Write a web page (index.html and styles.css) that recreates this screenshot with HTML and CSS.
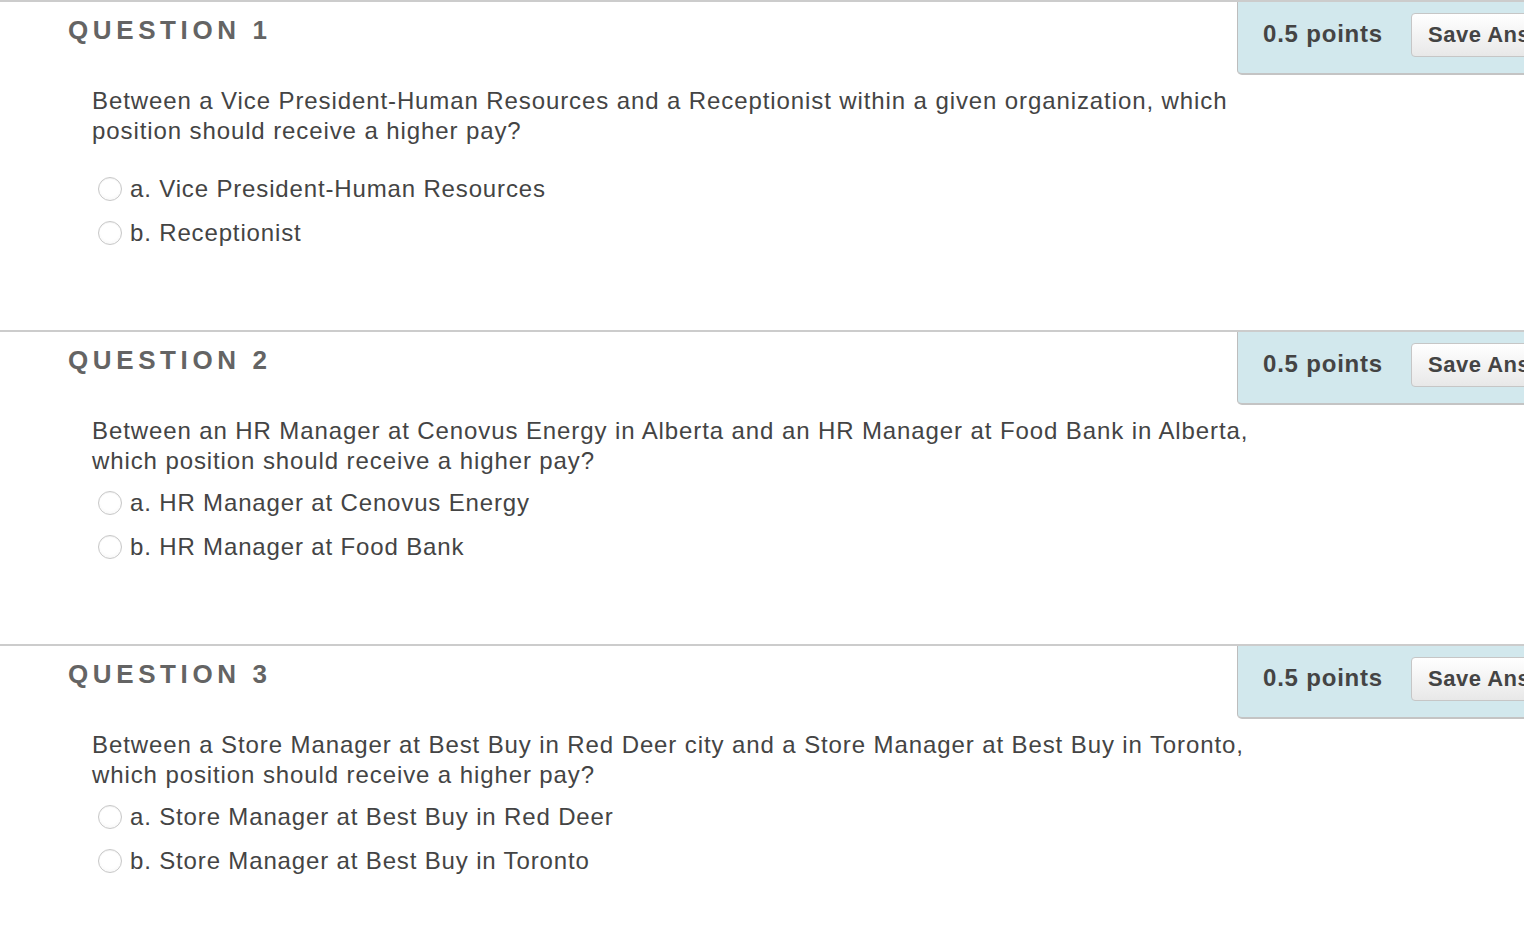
FILE: index.html
```html
<!DOCTYPE html>
<html lang="en">
<head>
<meta charset="utf-8">
<title>Questions</title>
<link rel="stylesheet" href="styles.css">
</head>
<body>
<div class="page">
  <section class="question">
    <div class="q-head">
      <h2 class="q-title">QUESTION 1</h2>
      <div class="points-box">
        <span class="points">0.5 points</span>
        <button class="save" type="button">Save Answer</button>
      </div>
    </div>
    <p class="q-text q-text--spaced">Between a Vice President-Human Resources and a Receptionist within a given organization, which position should receive a higher pay?</p>
    <ul class="options">
      <li class="option"><span class="radio"></span><span class="opt-label">a. Vice President-Human Resources</span></li>
      <li class="option"><span class="radio"></span><span class="opt-label">b. Receptionist</span></li>
    </ul>
  </section>
  <section class="question">
    <div class="q-head">
      <h2 class="q-title">QUESTION 2</h2>
      <div class="points-box">
        <span class="points">0.5 points</span>
        <button class="save" type="button">Save Answer</button>
      </div>
    </div>
    <p class="q-text">Between an HR Manager at Cenovus Energy in Alberta and an HR Manager at Food Bank in Alberta, which position should receive a higher pay?</p>
    <ul class="options">
      <li class="option"><span class="radio"></span><span class="opt-label">a. HR Manager at Cenovus Energy</span></li>
      <li class="option"><span class="radio"></span><span class="opt-label">b. HR Manager at Food Bank</span></li>
    </ul>
  </section>
  <section class="question">
    <div class="q-head">
      <h2 class="q-title">QUESTION 3</h2>
      <div class="points-box">
        <span class="points">0.5 points</span>
        <button class="save" type="button">Save Answer</button>
      </div>
    </div>
    <p class="q-text">Between a Store Manager at Best Buy in Red Deer city and a Store Manager at Best Buy in Toronto, which position should receive a higher pay?</p>
    <ul class="options">
      <li class="option"><span class="radio"></span><span class="opt-label">a. Store Manager at Best Buy in Red Deer</span></li>
      <li class="option"><span class="radio"></span><span class="opt-label">b. Store Manager at Best Buy in Toronto</span></li>
    </ul>
  </section>
</div>
</body>
</html>
```

FILE: styles.css
```css
html, body {
  margin: 0;
  padding: 0;
  background: #ffffff;
}

body {
  font-family: "Liberation Sans", Arial, Helvetica, sans-serif;
  color: #444444;
}

.page {
  width: 1524px;
  overflow: hidden;
}

.question {
  border-top: 2px solid #cccccc;
  padding-bottom: 75px;
}

.q-head {
  display: flex;
  justify-content: space-between;
  align-items: flex-start;
  height: 73px;
}

.q-title {
  margin: 13px 0 0 68px;
  font-size: 26px;
  line-height: 30px;
  font-weight: bold;
  letter-spacing: 4.6px;
  color: #646464;
}

.points-box {
  box-sizing: border-box;
  width: 287px;
  height: 73px;
  display: flex;
  align-items: flex-start;
  padding: 10px 0 0 25px;
  background: #d2e8ed;
  border-left: 1px solid #bdbdbd;
  border-bottom: 2px solid #c4c4c4;
  border-bottom-left-radius: 5px;
  overflow: hidden;
  flex-shrink: 0;
}

.points {
  flex: 0 0 148px;
  font-size: 24px;
  line-height: 44px;
  font-weight: bold;
  letter-spacing: 0.8px;
  color: #444444;
}

.save {
  flex-shrink: 0;
  height: 44px;
  margin-top: 1px;
  padding: 0 16px;
  border: 1px solid #c6c6c6;
  border-radius: 4px;
  background: linear-gradient(#ffffff, #e8e8e8);
  font-family: "Liberation Sans", Arial, Helvetica, sans-serif;
  font-size: 22px;
  font-weight: bold;
  letter-spacing: 0.5px;
  color: #444444;
  white-space: nowrap;
}

.q-text {
  margin: 11px 0 0 92px;
  width: 1195px;
  font-size: 24px;
  line-height: 30px;
  letter-spacing: 0.9px;
  color: #444444;
}

.q-text--spaced {
  margin-bottom: 21px;
}

.options {
  list-style: none;
  margin: 5px 0 0 98px;
  padding: 0;
}

.option {
  display: flex;
  align-items: center;
  height: 44px;
  gap: 8px;
}

.radio {
  box-sizing: border-box;
  width: 24px;
  height: 24px;
  border-radius: 50%;
  border: 1px solid #c8c8c8;
  background: radial-gradient(circle at 50% 40%, #ffffff 55%, #f1f1f1 100%);
  box-shadow: inset 0 1px 1px rgba(0, 0, 0, 0.06);
  flex-shrink: 0;
}

.opt-label {
  font-size: 24px;
  line-height: 30px;
  letter-spacing: 0.85px;
  color: #444444;
}
```
